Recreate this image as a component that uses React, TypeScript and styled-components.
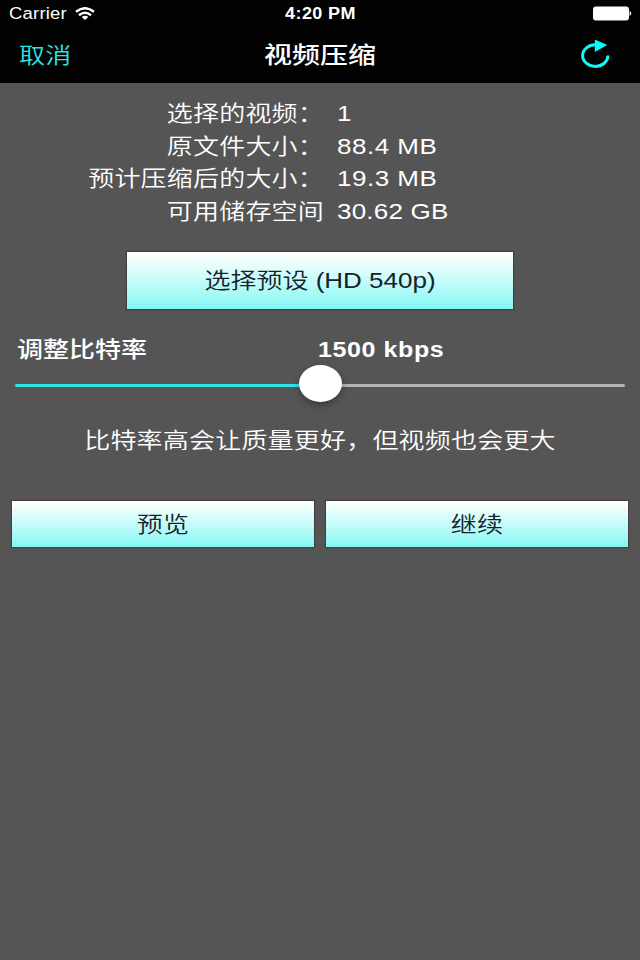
import type { CSSProperties, ReactNode } from "react";
import styled, { createGlobalStyle } from "styled-components";

const GlobalStyle = createGlobalStyle`
  * {
    box-sizing: border-box;
  }
  body {
    margin: 0;
    background: #555;
  }
`;

const Screen = styled.div`
  display: flex;
  flex-direction: column;
  width: 640px;
  height: 960px;
  overflow: hidden;
  background: #555;
  color: #fff;
  font-family: "Liberation Sans", "Noto Sans CJK SC", sans-serif;
`;

const Header = styled.header`
  height: 83px;
  background: #020202;
`;

const StatusBar = styled.div`
  display: grid;
  grid-template-columns: 1fr auto 1fr;
  align-items: center;
  height: 27px;
  padding: 0 8px 0 9px;
`;

const Carrier = styled.div`
  display: flex;
  align-items: center;
  gap: 8px;
`;

const Battery = styled.svg`
  justify-self: end;
`;

const NavBar = styled.nav`
  display: grid;
  grid-template-columns: 1fr auto 1fr;
  align-items: center;
  height: 56px;
  padding: 0 29px 0 19px;
`;

const NavButton = styled.button`
  display: flex;
  justify-self: start;
  padding: 0;
  border: none;
  background: none;
  color: #2ae2e2;
  font-family: inherit;
  cursor: pointer;
`;

const ReloadButton = styled(NavButton)`
  justify-self: end;
`;

type TextProps = {
  $size?: number;
  $weight?: number;
  $squash?: number;
  $spacing?: number;
};

const Text = styled.span<TextProps>`
  display: inline-block;
  font-size: ${(p) => p.$size ?? 26}px;
  font-weight: ${(p) => p.$weight ?? 400};
  line-height: 32px;
  letter-spacing: ${(p) => p.$spacing ?? 0.2}px;
  white-space: nowrap;
  transform: scaleY(${(p) => p.$squash ?? 0.85});
`;

const StatusText = styled(Text)`
  line-height: 26px;
`;

const Title = styled(Text)`
  padding: 1px 0 0 10px;
`;

const Stats = styled.dl`
  display: grid;
  grid-template-columns: 324px 1fr;
  grid-auto-rows: 32.7px;
  column-gap: 13px;
  align-items: center;
  margin: 14px 0 0;
`;

const StatLabel = styled.dt`
  margin-bottom: 1px;
  text-align: right;
`;

const StatValue = styled.dd`
  margin: 0 0 1px;
`;

const GradientButton = styled.button`
  display: flex;
  align-items: center;
  justify-content: center;
  height: 46px;
  padding: 0;
  border: none;
  background: linear-gradient(#fff, #d5fdfb 38%, #84f7f3);
  box-shadow: 0 0 1px 1px #46403f;
  color: #14222c;
  font-family: inherit;
  cursor: pointer;
`;

const PresetButton = styled(GradientButton)`
  align-self: center;
  width: 386px;
  height: 57px;
  margin-top: 24px;
`;

const BitrateRow = styled.div`
  display: grid;
  grid-template-columns: 301px 1fr;
  align-items: start;
  margin: 24px 0 0 17px;
`;

const BitrateValue = styled(Text)`
  justify-self: start;
`;

const Track = styled.div`
  display: flex;
  align-items: center;
  height: 41px;
  margin: 0 15px;
`;

const TrackFill = styled.div`
  width: var(--fill);
  height: 3px;
  border-radius: 2px;
  background: #2fe3e8;
`;

const TrackRest = styled.div`
  flex: 1;
  height: 3px;
  border-radius: 2px;
  background: #b3b3b3;
`;

const Thumb = styled.div`
  flex: none;
  width: 43px;
  height: 37px;
  margin: 0 -21.5px 3px;
  border-radius: 50%;
  background: #fff;
  box-shadow: 0 3px 7px rgba(0, 0, 0, 0.35);
  z-index: 1;
`;

const Hint = styled.p`
  margin: 18px 0 0;
  text-align: center;
`;

const Actions = styled.div`
  display: grid;
  grid-template-columns: 1fr 1fr;
  gap: 12px;
  margin: 45px 12px 0;
`;

const stats: { label: string; value: string; spacing: number }[] = [
  { label: "选择的视频：", value: "1", spacing: 0.2 },
  { label: "原文件大小：", value: "88.4 MB", spacing: 0.5 },
  { label: "预计压缩后的大小：", value: "19.3 MB", spacing: 0.5 },
  { label: "可用储存空间", value: "30.62 GB", spacing: 0.2 },
];

type SliderProps = {
  value: number;
  max: number;
};

function Slider({ value, max }: SliderProps) {
  const fill = { "--fill": `${(value / max) * 100}%` } as CSSProperties;
  return (
    <Track style={fill}>
      <TrackFill />
      <Thumb />
      <TrackRest />
    </Track>
  );
}

function Stat({ label, children }: { label: string; children: ReactNode }) {
  return (
    <>
      <StatLabel>
        <Text $weight={350}>{label}</Text>
      </StatLabel>
      <StatValue>{children}</StatValue>
    </>
  );
}

function WifiIcon() {
  return (
    <svg width="20" height="14" viewBox="0 0 20 14" fill="none" stroke="#fff" strokeWidth="2.4">
      <path d="M1 4.8 Q10 -2.4 19 4.8" />
      <path d="M4 8.2 Q10 3.4 16 8.2" />
      <path d="M6.6 10 Q10 7.4 13.4 10 L10 13 Z" fill="#fff" stroke="none" />
    </svg>
  );
}

function ReloadIcon() {
  return (
    <svg width="30" height="32" viewBox="0 0 30 32">
      <path d="M14.5 5.8 A12.7 10.8 0 1 0 27 16.6" fill="none" stroke="#17f5f5" strokeWidth="3" />
      <path d="M13.8 0.4 L26.2 6 L13.8 13 Z" fill="#00ffff" />
    </svg>
  );
}

export default function App() {
  return (
    <Screen lang="zh-CN">
      <GlobalStyle />
      <Header>
        <StatusBar>
          <Carrier>
            <StatusText $size={18.5} $squash={0.9} $spacing={0.2}>Carrier</StatusText>
            <WifiIcon />
          </Carrier>
          <StatusText $size={18} $weight={700} $squash={0.9} $spacing={0.4}>4:20 PM</StatusText>
          <Battery width="39" height="15" viewBox="0 0 39 15" fill="#fff">
            <rect x="0" y="0.5" width="36" height="14" rx="3" />
            <path d="M36.6 4.8 Q40 7.5 36.6 10.2 Z" />
          </Battery>
        </StatusBar>
        <NavBar>
          <NavButton>
            <Text $weight={350}>取消</Text>
          </NavButton>
          <Title $size={28} $weight={500} $squash={0.82} $spacing={0}>视频压缩</Title>
          <ReloadButton aria-label="重置">
            <ReloadIcon />
          </ReloadButton>
        </NavBar>
      </Header>
      <Stats>
        {stats.map((s) => (
          <Stat key={s.label} label={s.label}>
            <Text $spacing={s.spacing}>{s.value}</Text>
          </Stat>
        ))}
      </Stats>
      <PresetButton>
        <Text $weight={350} $spacing={0}>选择预设 (HD 540p)</Text>
      </PresetButton>
      <BitrateRow>
        <Text $weight={500} $spacing={0}>调整比特率</Text>
        <BitrateValue $size={25} $weight={700} $squash={0.9} $spacing={0.6}>1500 kbps</BitrateValue>
      </BitrateRow>
      <Slider value={1500} max={3000} />
      <Hint>
        <Text $weight={350}>比特率高会让质量更好，但视频也会更大</Text>
      </Hint>
      <Actions>
        <GradientButton>
          <Text $weight={350}>预览</Text>
        </GradientButton>
        <GradientButton>
          <Text $weight={350}>继续</Text>
        </GradientButton>
      </Actions>
    </Screen>
  );
}
